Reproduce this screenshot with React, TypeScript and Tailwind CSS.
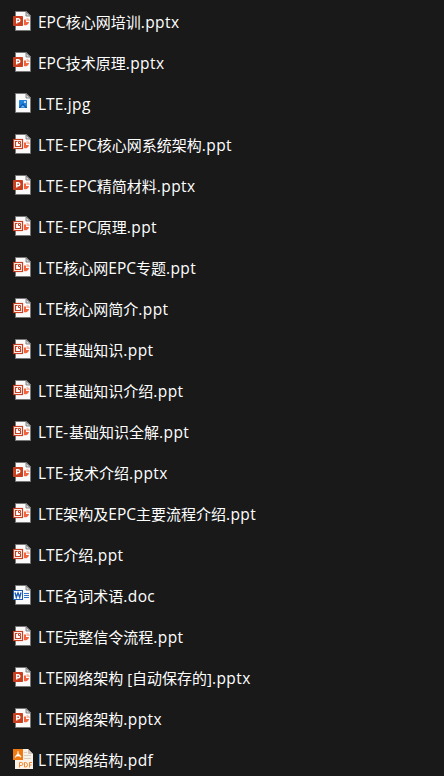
import React from 'react';

type Kind = 'pptx' | 'ppt' | 'jpg' | 'doc' | 'pdf';

const files: [string, Kind][] = [
  ['EPC核心网培训', 'pptx'],
  ['EPC技术原理', 'pptx'],
  ['LTE', 'jpg'],
  ['LTE-EPC核心网系统架构', 'ppt'],
  ['LTE-EPC精简材料', 'pptx'],
  ['LTE-EPC原理', 'ppt'],
  ['LTE核心网EPC专题', 'ppt'],
  ['LTE核心网简介', 'ppt'],
  ['LTE基础知识', 'ppt'],
  ['LTE基础知识介绍', 'ppt'],
  ['LTE-基础知识全解', 'ppt'],
  ['LTE-技术介绍', 'pptx'],
  ['LTE架构及EPC主要流程介绍', 'ppt'],
  ['LTE介绍', 'ppt'],
  ['LTE名词术语', 'doc'],
  ['LTE完整信令流程', 'ppt'],
  ['LTE网络架构 [自动保存的]', 'pptx'],
  ['LTE网络架构', 'pptx'],
  ['LTE网络结构', 'pdf'],
];

function Sheet() {
  return (
    <>
      <path d="M2.5.5H13.5L17.5 4.5V19.5H2.5Z" fill="#fafafa" stroke="#777" />
      <path d="M13 1V5H17.5Z" fill="#d8d8d8" stroke="#6d6d6d" strokeWidth=".8" />
    </>
  );
}

function Chart() {
  return (
    <>
      <path d="M11 8.5H13V11H16A3.6 3.6 0 0 1 11 14Z" fill="#f0643f" />
      <path d="M13.5 7A3.6 3.6 0 0 1 17 10H13.5Z" fill="#f7b9a3" />
    </>
  );
}

function FileIcon({ kind }: { kind: Kind }) {
  return (
    <svg width="20" height="20" viewBox="0 0 20 20" className="mt-[10px] block shrink-0">
      {kind !== 'pdf' && <Sheet />}
      {kind === 'pptx' && (
        <>
          <Chart />
          <rect x="0" y="5" width="10" height="10" rx=".8" fill="#c8401f" />
          <path d="M3.7 12.6V7.7H5.3A1.5 1.5 0 0 1 5.3 10.7H3.7" fill="none" stroke="#fff" strokeWidth="1.4" />
        </>
      )}
      {kind === 'ppt' && (
        <>
          <Chart />
          <rect x=".5" y="5.5" width="9" height="9" fill="#fff" stroke="#c8401f" strokeWidth="1.2" />
          <path d="M4.5 7.5H2.5V12.5H7.5V10" fill="none" stroke="#c8401f" strokeWidth="1.2" />
          <path d="M5.5 7.5H7.5V9.5H5.5Z" fill="none" stroke="#c8401f" />
        </>
      )}
      {kind === 'doc' && (
        <>
          <path d="M11 8.5H16M11 10.5H16M11 12.5H16" stroke="#2f73c8" />
          <rect x=".5" y="5.5" width="9" height="9" fill="#fff" stroke="#1c5bb8" />
          <path d="M2 7.5L3.3 12.3L5 8L6.7 12.3L8 7.5" fill="none" stroke="#1c5bb8" strokeWidth="1.4" />
        </>
      )}
      {kind === 'jpg' && (
        <>
          <rect x="6" y="7" width="8" height="8" rx=".7" fill="#2384dc" />
          <path d="M6 14.3L9.8 10.3L14 14.3V15H6Z" fill="#1256ac" />
          <path d="M7.5 14.6L9.8 12.2L12.3 14.6Z" fill="#67c8f5" />
          <circle cx="12" cy="9" r=".9" fill="#fff" />
        </>
      )}
      {kind === 'pdf' && (
        <>
          <path d="M2 0H15L20 5V20H2Z" fill="#faf1e7" />
          <path d="M15 0V5H20Z" fill="#d5c8ba" />
          <path d="M11 3.5H14M11 6.5H18M11 9.5H18" stroke="#d9cec3" />
          <rect width="10" height="11" fill="#ee7910" />
          <path d="M5 2.2V4.6L2 8.5M5 4.6L8 8.2M2.7 7.2Q5 6 8 7.3" fill="none" stroke="#fff" strokeWidth="1.1" />
          <path
            d="M6.5 18.5V13.5H8.2Q10 13.5 10 15T8.2 16.5H6.5M11.5 13.5V18H12.5Q14.5 18 14.5 15.8T12.5 13.5ZM16.5 18.5V13.5H19M16.5 16H18.5"
            fill="none"
            stroke="#ee8a35"
          />
        </>
      )}
    </svg>
  );
}

function FileName({ name, kind }: { name: string; kind: Kind }) {
  const parts = name.split(/([A-Z]+|-)/).filter(Boolean);
  return (
    <span className="ml-[5px] whitespace-pre font-['Open_Sans','Noto_Sans_CJK_SC',sans-serif] text-[15px] leading-[43px] font-[370]">
      {parts.map((part, i) => {
        if (part === '-') {
          return (
            <span key={i} className="tracking-[1px]">
              {part}
            </span>
          );
        }
        return (
          <span key={i} className={/^[A-Z]+$/.test(part) ? 'text-[15.5px]' : ''}>
            {part}
          </span>
        );
      })}
      <span className="text-[15.5px] tracking-[0.4px]">.{kind}</span>
    </span>
  );
}

export default function App() {
  return (
    <main className="h-[776px] w-[444px] overflow-hidden bg-[#191919] pt-px pl-[13px] text-white">
      <ul>
        {files.map(([name, kind]) => (
          <li key={name} className="flex h-[41px] items-start">
            <FileIcon kind={kind} />
            <FileName name={name} kind={kind} />
          </li>
        ))}
      </ul>
    </main>
  );
}
